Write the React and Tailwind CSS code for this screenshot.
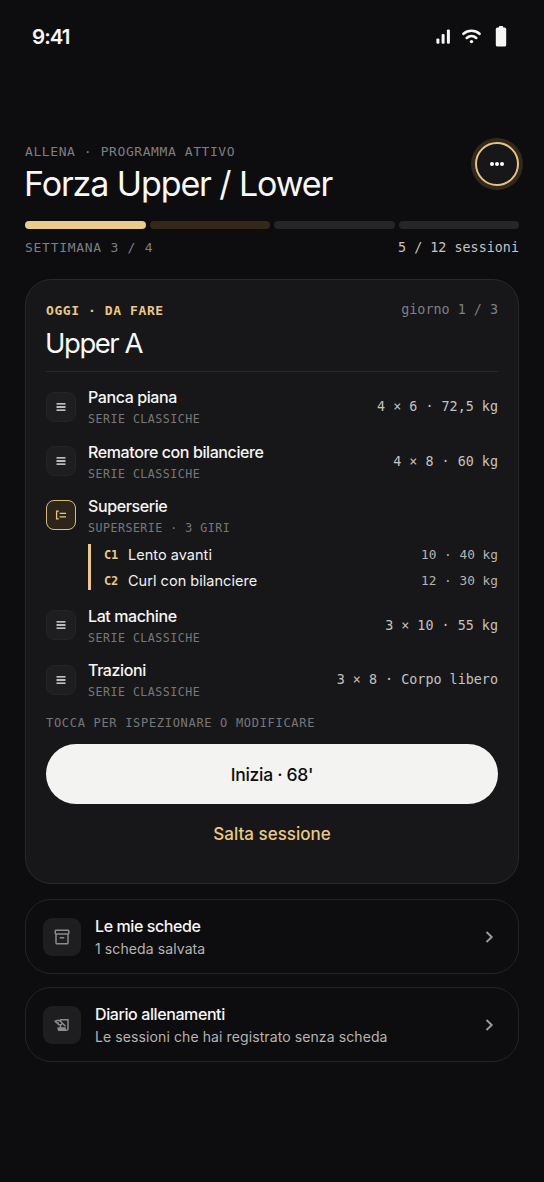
import { MdHistoryEdu, MdOutlineInventory2 } from 'react-icons/md';

const exercises = [
  { name: 'Panca piana', type: 'SERIE CLASSICHE', load: '4 × 6 · 72,5 kg' },
  { name: 'Rematore con bilanciere', type: 'SERIE CLASSICHE', load: '4 × 8 · 60 kg' },
  {
    name: 'Superserie',
    type: 'SUPERSERIE · 3 GIRI',
    superset: [
      { id: 'C1', name: 'Lento avanti', load: '10 · 40 kg' },
      { id: 'C2', name: 'Curl con bilanciere', load: '12 · 30 kg' },
    ],
  },
  { name: 'Lat machine', type: 'SERIE CLASSICHE', load: '3 × 10 · 55 kg' },
  { name: 'Trazioni', type: 'SERIE CLASSICHE', load: '3 × 8 · Corpo libero' },
];

const weeks = ['bg-[#eccb8c]', 'bg-[#33291a]', 'bg-[#262628]', 'bg-[#262628]'];

function StatusBar() {
  return (
    <div className="h-[74px] shrink-0 flex items-center justify-between pl-[32px] pr-[37px] text-[#f6f6f4]">
      <span className="text-[20.5px] font-semibold tracking-[-0.95px]">9:41</span>
      <div className="flex items-center -mt-[2px]">
        <svg className="w-[15px] h-[15px] mr-[11px]" viewBox="0 0 15 15" fill="currentColor">
          <rect x="0.4" y="9.5" width="3" height="5.3" rx="1.1" />
          <rect x="5.6" y="5" width="3" height="9.8" rx="1.1" />
          <rect x="10.9" y="0.5" width="3" height="14.3" rx="1.1" />
        </svg>
        <svg className="w-[19px] h-[15px] mr-[14px]" viewBox="0 0 19 15" fill="none" stroke="currentColor" strokeWidth="2.6" strokeLinecap="round">
          <path d="M1.5 4.8C6 .8 13 .8 17.5 4.8" />
          <path d="M4.7 8.9c2.8-2.4 6.8-2.4 9.6 0" />
          <path d="M9.5 12.6h.01" strokeWidth="3.4" />
        </svg>
        <svg className="w-[12px] h-[21px]" viewBox="0 0 12 21" fill="currentColor">
          <rect x="3.8" y="0" width="4.4" height="4" rx="1" />
          <rect x="0.8" y="1.6" width="10.4" height="18.9" rx="1.6" />
        </svg>
      </div>
    </div>
  );
}

function TypeIcon({ grouped }) {
  if (grouped) {
    return (
      <div className="size-[30px] shrink-0 rounded-[8px] border border-[#d9bb82] bg-[#2d2519] flex items-center justify-center">
        <svg className="w-[12px] h-[10px]" viewBox="0 0 12 10" fill="none" stroke="#e5c68a" strokeWidth="1.3">
          <path d="M3.8 1.2H1.6v7.6h2.2M4.6 3.4H11M4.6 6.8H11" />
        </svg>
      </div>
    );
  }
  return (
    <div className="size-[30px] shrink-0 rounded-[8px] border border-[#242426] bg-[#1e1e20] flex items-center justify-center">
      <svg className="w-[10px] h-[8px] -ml-px" viewBox="0 0 10 8" stroke="#f1f1ef" strokeWidth="1.3">
        <path d="M.5 .9h9M.5 4h9M.5 7.1h9" />
      </svg>
    </div>
  );
}

function Exercise({ item }) {
  return (
    <div>
      <div className="h-[39px] flex items-center">
        <TypeIcon grouped={Boolean(item.superset)} />
        <div className="ml-[12px] flex-1 min-w-0">
          <div className="h-[20px] leading-[20px] text-[16px] font-medium tracking-[-0.4px] text-[#f6f6f4]">{item.name}</div>
          <div className="h-[19px] pt-[4px] leading-[17px] font-['DejaVu_Sans_Mono'] text-[11.6px] tracking-[0.5px] text-[#77777a]">{item.type}</div>
        </div>
        {item.load && (
          <span className="pt-px font-['DejaVu_Sans_Mono'] text-[13.4px] text-[#c3c3c1]">{item.load}</span>
        )}
      </div>
      {item.superset && (
        <div className="mt-[9.5px] ml-[42px] border-l-[3px] border-[#e9c88a] pl-[13px] flex flex-col gap-[6px]">
          {item.superset.map((sub) => (
            <div key={sub.id} className="h-[20px] flex items-center">
              <span className="w-[24px] pt-px font-['DejaVu_Sans_Mono'] text-[12px] font-bold tracking-[-0.1px] text-[#e9c88a]">{sub.id}</span>
              <span className="flex-1 pt-px text-[14.5px] tracking-[0.03px] text-[#f1f1ef]">{sub.name}</span>
              <span className="pt-px font-['DejaVu_Sans_Mono'] text-[12.8px] text-[#b4b4b3]">{sub.load}</span>
            </div>
          ))}
        </div>
      )}
    </div>
  );
}

function LinkCard({ icon: Icon, title, subtitle }) {
  return (
    <div className="h-[75px] rounded-[26px] border border-[#242426] flex items-center pl-[17px] pr-[24px]">
      <div className="size-[38px] shrink-0 rounded-[9px] bg-[#1e1e20] flex items-center justify-center">
        <Icon className="size-[18px] text-[#8b8b8d]" />
      </div>
      <div className="ml-[14px] pt-px flex-1">
        <div className="h-[22px] leading-[22px] text-[16px] font-medium text-[#f6f6f4] tracking-[-0.4px]">{title}</div>
        <div className="h-[23px] leading-[23px] text-[14px] tracking-[0.1px] text-[#b4b4b3]">{subtitle}</div>
      </div>
      <svg className="w-[9px] h-[12px]" viewBox="0 0 9 12" fill="none" stroke="#98989a" strokeWidth="2">
        <path d="M1.5 1 6.7 6 1.5 11" />
      </svg>
    </div>
  );
}

export default function App() {
  return (
    <div className="w-full h-[1182px] overflow-hidden flex flex-col bg-[#0d0d0f] font-['Inter',sans-serif]">
      <StatusBar />
      <main className="px-[25px] pt-[64px]">
        <header className="h-[83px] flex justify-between">
          <div className="pt-[5px]">
            <div className="h-[18px] leading-[18px] font-['DejaVu_Sans_Mono'] text-[13px] tracking-[0.58px] text-[#7f7f82]">ALLENA · PROGRAMMA ATTIVO</div>
            <h1 className="-ml-px leading-[46px] text-[34px] tracking-[-1.1px] text-[#f8f8f6] whitespace-nowrap">Forza Upper / Lower</h1>
          </div>
          <button className="mt-[4px] size-[44px] shrink-0 rounded-full border-2 border-[#e3c389] bg-[#171719] ring-4 ring-[#33291a] flex items-center justify-center gap-px">
            <i className="size-[4px] rounded-full bg-white" />
            <i className="size-[4px] rounded-full bg-white" />
            <i className="size-[4px] rounded-full bg-white" />
          </button>
        </header>

        <div className="grid grid-cols-4 gap-[4px]">
          {weeks.map((color, i) => (
            <div key={i} className={`h-[8px] rounded-full ${color}`} />
          ))}
        </div>
        <div className="mt-[9px] h-[20px] flex items-center justify-between font-['DejaVu_Sans_Mono']">
          <span className="text-[13px] tracking-[0.72px] text-[#7f7f82]">SETTIMANA 3 / 4</span>
          <span className="text-[13.4px] text-[#c3c3c1]">5 / 12 sessioni</span>
        </div>

        <section className="mt-[21px] h-[605px] rounded-[26px] border border-[#29292b] bg-[#171719] px-[20px] pt-[20px]">
          <div className="h-[20px] flex items-center justify-between font-['DejaVu_Sans_Mono']">
            <span className="pt-px text-[13px] font-bold tracking-[0.58px] text-[#e9c88a]">OGGI · DA FARE</span>
            <span className="text-[13.4px] text-[#7f7f82]">giorno 1 / 3</span>
          </div>
          <h2 className="h-[52px] border-b border-[#29292b] pt-[4px] leading-[38px] text-[27.5px] tracking-[-1.45px] text-[#f8f8f6]">
            <span className="-ml-px">Upper A</span>
          </h2>

          <div className="mt-[15.4px] flex flex-col gap-[15.3px]">
            {exercises.map((item) => (
              <Exercise key={item.name} item={item} />
            ))}
          </div>

          <p className="mt-[14.5px] h-[18px] leading-[18px] font-['DejaVu_Sans_Mono'] text-[12px] tracking-[0.69px] text-[#77777a]">
            TOCCA PER ISPEZIONARE O MODIFICARE
          </p>
          <button className="mt-[12px] w-full h-[60px] pt-[3px] rounded-full bg-[#f3f3f1] text-[17.5px] font-medium tracking-[-0.3px] text-[#0d0d0f]">
            Inizia · 68'
          </button>
          <button className="w-full h-[60px] pt-[2px] text-[17px] font-medium text-[#e9c88a]">Salta sessione</button>
        </section>

        <div className="mt-[15px] flex flex-col gap-[13px]">
          <LinkCard icon={MdOutlineInventory2} title="Le mie schede" subtitle="1 scheda salvata" />
          <LinkCard icon={MdHistoryEdu} title="Diario allenamenti" subtitle="Le sessioni che hai registrato senza scheda" />
        </div>
      </main>
    </div>
  );
}
